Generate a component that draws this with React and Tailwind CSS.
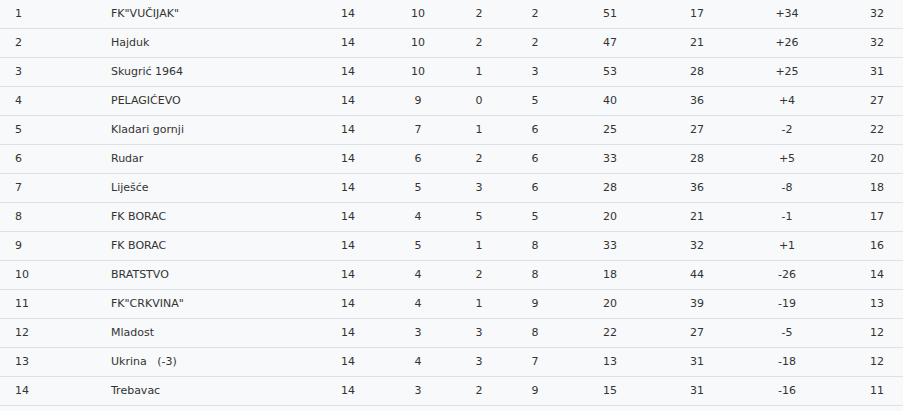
const rows = [
  [1, 'FK"VUČIJAK"', 14, 10, 2, 2, 51, 17, '+34', 32],
  [2, 'Hajduk', 14, 10, 2, 2, 47, 21, '+26', 32],
  [3, 'Skugrić 1964', 14, 10, 1, 3, 53, 28, '+25', 31],
  [4, 'PELAGIĆEVO', 14, 9, 0, 5, 40, 36, '+4', 27],
  [5, 'Kladari gornji', 14, 7, 1, 6, 25, 27, '-2', 22],
  [6, 'Rudar', 14, 6, 2, 6, 33, 28, '+5', 20],
  [7, 'Liješće', 14, 5, 3, 6, 28, 36, '-8', 18],
  [8, 'FK BORAC', 14, 4, 5, 5, 20, 21, '-1', 17],
  [9, 'FK BORAC', 14, 5, 1, 8, 33, 32, '+1', 16],
  [10, 'BRATSTVO', 14, 4, 2, 8, 18, 44, '-26', 14],
  [11, 'FK"CRKVINA"', 14, 4, 1, 9, 20, 39, '-19', 13],
  [12, 'Mladost', 14, 3, 3, 8, 22, 27, '-5', 12],
  [13, 'Ukrina   (-3)', 14, 4, 3, 7, 13, 31, '-18', 12],
  [14, 'Trebavac', 14, 3, 2, 9, 15, 31, '-16', 11],
]

export default function App() {
  return (
    <div className="w-[903px] h-[411px] overflow-hidden bg-[#f8f9fa] text-[#333] text-[11px] font-['Verdana','DejaVu_Sans',sans-serif]">
      {rows.map((r) => (
        <div
          key={r[0]}
          className="grid grid-cols-[111px_186px_102px_38px_84px_28px_122px_52px_128px_52px] h-[29px] items-center border-b border-[#dee1e4]"
        >
          <div className="pl-[15px]">{r[0]}</div>
          <div className="whitespace-pre">{r[1]}</div>
          {r.slice(2).map((v, i) => (
            <div key={i} className="text-center">
              {v}
            </div>
          ))}
        </div>
      ))}
    </div>
  )
}
